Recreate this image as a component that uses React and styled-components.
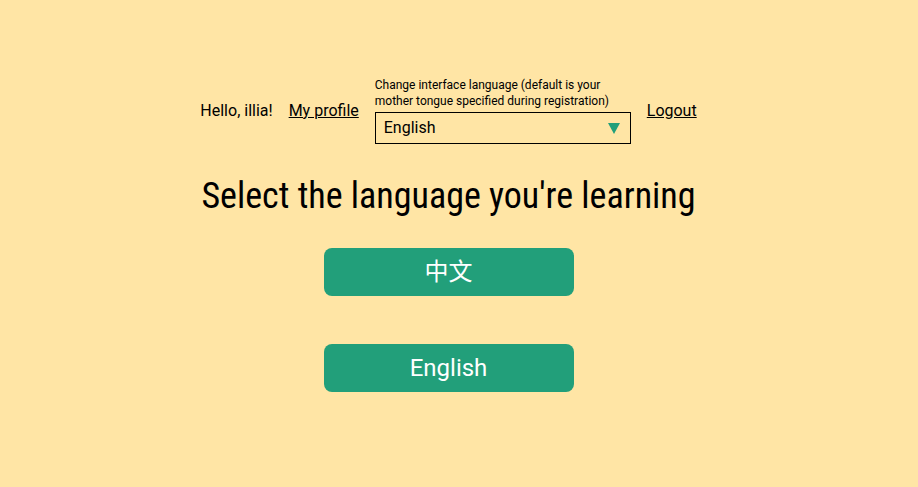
import React from "react";
import styled, { createGlobalStyle } from "styled-components";

const GlobalStyle = createGlobalStyle`
  * { box-sizing: border-box; }
  body {
    margin: 0;
    background: #ffe5a5;
    color: #000;
    font-family: Roboto, "Noto Sans CJK SC", sans-serif;
    font-size: 16px;
    line-height: 24px;
  }
`;

const Page = styled.div`
  display: flex;
  flex-direction: column;
  align-items: center;
  min-height: 100vh;
  padding: 77px 21px 48px 0;
`;

const Header = styled.header`
  display: flex;
  align-items: center;
  gap: 16px;
`;

const NavLink = styled.a`
  color: inherit;
  text-decoration: underline;
`;

const LanguageField = styled.div`
  display: flex;
  flex-direction: column;
  gap: 3px;
  width: 256px;
`;

const FieldLabel = styled.label`
  font-size: 12px;
  line-height: 16px;
`;

const SelectBox = styled.div`
  display: grid;
  align-items: center;
  border: 1px solid #000;

  > * { grid-area: 1 / 1; }
`;

const Select = styled.select`
  appearance: none;
  width: 100%;
  height: 30px;
  padding: 0 32px 0 8px;
  border: 0;
  background: transparent;
  color: inherit;
  font: inherit;
`;

const Arrow = styled.svg`
  justify-self: end;
  margin-right: 10px;
  pointer-events: none;
  fill: #229f7a;
`;

const Title = styled.h1`
  margin: 28px 0;
  font-family: "Roboto Condensed", Roboto, sans-serif;
  font-size: 36px;
  font-weight: 400;
  font-stretch: condensed;
  line-height: 48px;
`;

const Choices = styled.main`
  display: flex;
  flex-direction: column;
  gap: 48px;
  width: 250px;
`;

const ChoiceButton = styled.button`
  height: 48px;
  border: 0;
  border-radius: 8px;
  background: #229f7a;
  color: #fff;
  font: inherit;
  font-size: 24px;
  cursor: pointer;
`;

export default function App() {
  return (
    <>
      <GlobalStyle />
      <Page>
        <Header>
          <span>Hello, illia!</span>
          <NavLink href="#profile">My profile</NavLink>
          <LanguageField>
            <FieldLabel htmlFor="interface-language">
              Change interface language (default is your mother tongue specified during registration)
            </FieldLabel>
            <SelectBox>
              <Select id="interface-language" defaultValue="en">
                <option value="en">English</option>
                <option value="zh">中文</option>
              </Select>
              <Arrow width="12" height="12" viewBox="0 0 12 12" aria-hidden="true">
                <path d="M0 1h12L6 12z" />
              </Arrow>
            </SelectBox>
          </LanguageField>
          <NavLink href="#logout">Logout</NavLink>
        </Header>
        <Title>Select the language you're learning</Title>
        <Choices>
          <ChoiceButton type="button" lang="zh">中文</ChoiceButton>
          <ChoiceButton type="button">English</ChoiceButton>
        </Choices>
      </Page>
    </>
  );
}
